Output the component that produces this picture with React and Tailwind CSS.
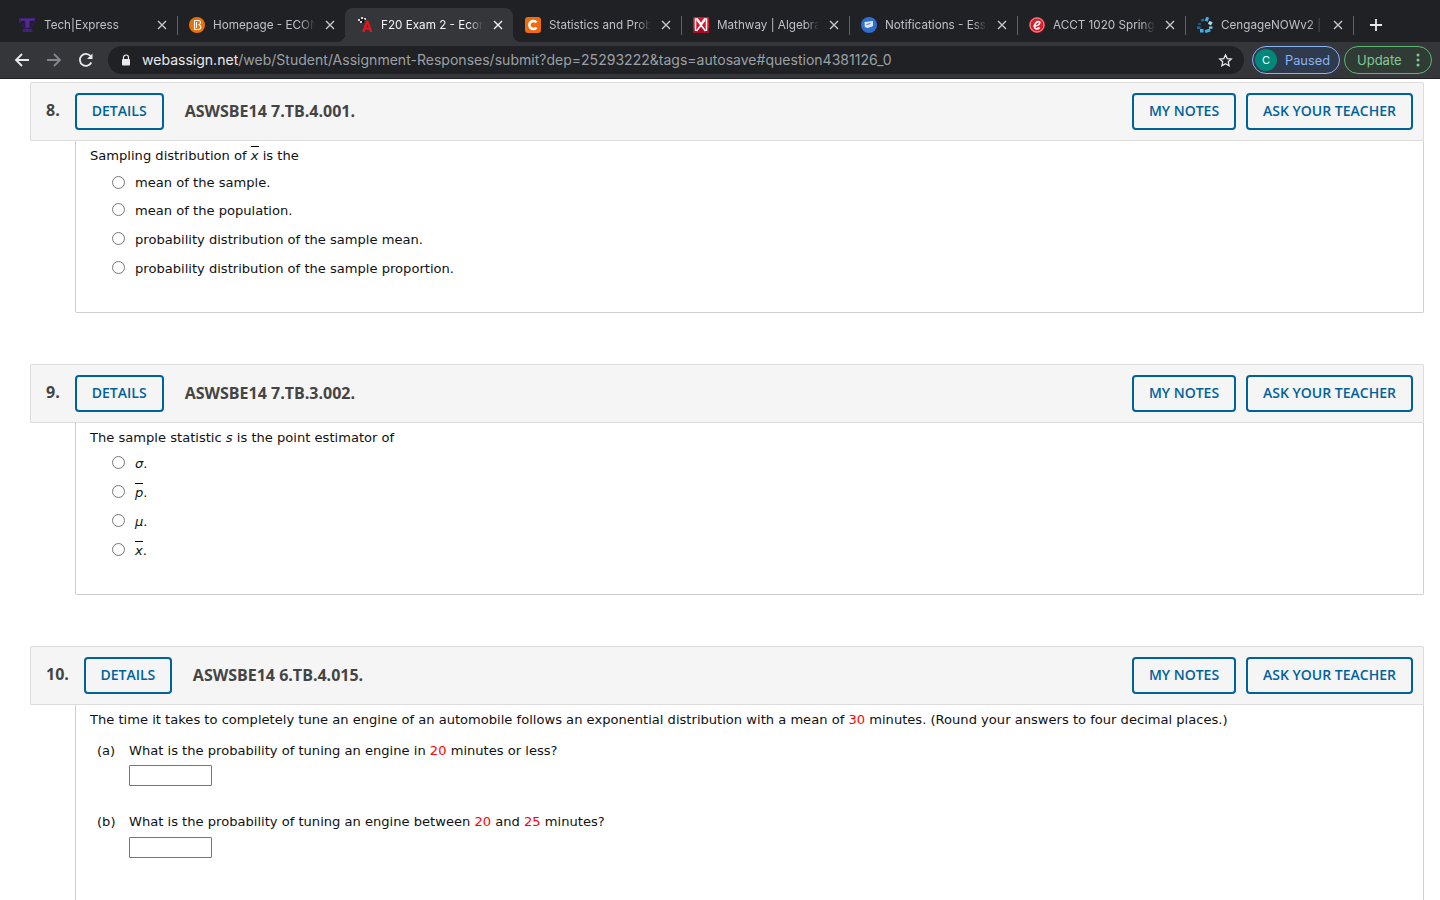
import React from "react";

const Fav = ({ children }) => (
  <svg width="16" height="16" viewBox="0 0 16 16" className="shrink-0">{children}</svg>
);

const icons = {
  tech: (
    <Fav>
      <path d="M0 1h17v4.500l-1.500 1V4h-4.500v7l2.300 2v2H3.500v-2l2.300-2V4H1.500v2.500L0 5.500z" fill="#3f2273" />
      <path d="M2 2h13v1.500H9.800V13H6.800V3.500H2z" fill="#55289a" />
      <path d="M3.500 6c0 4 2 5.500 5 5.500S13.500 10 13.500 6" stroke="#2f1a57" strokeWidth="1.600" fill="none" />
    </Fav>
  ),
  bright: (
    <Fav>
      <circle cx="8" cy="8" r="8" fill="#e8710a" />
      <path d="M5.500 3.500h4c1.500 0 2 1 2 2s-.8 2-2 2.300c1.500.2 2.300 1.200 2.300 2.300 0 1.400-1 2.400-2.500 2.400h-3.800z" fill="none" stroke="#fff" strokeWidth="1.100" />
      <path d="M7.500 5v6" stroke="#fff" strokeWidth="1" />
    </Fav>
  ),
  exam: (
    <Fav>
      <g fill="#d1d5db">
        <rect x="1" y="2" width="2" height="2" />
        <rect x="4" y="0" width="2" height="2" />
        <rect x="7" y="1" width="2" height="2" />
        <rect x="3" y="4" width="2" height="2" />
      </g>
      <g fill="#111">
        <rect x="3" y="2" width="1.500" height="2" />
        <rect x="6" y="2" width="1.500" height="2" />
        <rect x="5" y="4" width="2" height="2" />
      </g>
      <path d="M9.200 3.500h2L15.500 15h-2.600l-.7-2.300H8.400L7.700 15H5z" fill="#e3161f" />
      <path d="M9.300 10.600h2.200L10.400 7z" fill="#35363a" />
    </Fav>
  ),
  chegg: (
    <Fav>
      <rect width="16" height="16" rx="3" fill="#f26a0e" />
      <path d="M11.500 5.500A4 4 0 1 0 11.500 10.500" fill="none" stroke="#fff" strokeWidth="2.600" />
    </Fav>
  ),
  mathway: (
    <Fav>
      <rect width="16" height="16" rx="1" fill="#d7152f" />
      <rect y="11" width="16" height="5" fill="#a30d25" />
      <path d="M2.500 14V2h2L8 7l3.500-5h2v12M4 3l8.500 11M12 3L3.500 14" fill="none" stroke="#fff" strokeWidth="1.500" />
    </Fav>
  ),
  notif: (
    <Fav>
      <circle cx="8" cy="8" r="8" fill="#2f6fd0" />
      <path d="M3.500 5l8.500-1v5.500L6.500 11 3.800 10z" fill="#dbe7fa" />
      <path d="M5.500 7.500l4-1M8 11.500l4-2" stroke="#2f6fd0" strokeWidth=".9" />
    </Fav>
  ),
  acct: (
    <Fav>
      <circle cx="8" cy="8" r="8" fill="#d6202c" />
      <circle cx="8" cy="8" r="7" fill="none" stroke="#f2b8bc" strokeWidth=".8" />
      <path d="M4.500 8.800c3 .2 6-1 6.300-3 .2-1.600-2.300-1.600-3.800 0C5.500 7.500 4.800 10.500 6.500 11.500c1.300.7 3 0 4.200-1" fill="none" stroke="#fff" strokeWidth="1.700" />
    </Fav>
  ),
  cengage: (
    <Fav>
      <rect x="4" y="2" width="3" height="2.500" transform="rotate(-20 5 3)" fill="#1d6f9c" />
      <rect x="8.500" y="0" width="3" height="4.500" transform="rotate(20 10 2)" fill="#3fb0e4" />
      <rect x="12" y="4" width="3.500" height="3.500" transform="rotate(30 13 5)" fill="#a9dcf2" />
      <rect x="1" y="6" width="3" height="2.200" fill="#155a80" />
      <rect x="0" y="9.500" width="3.500" height="2.500" fill="#1d6f9c" />
      <rect x="3" y="12" width="3.500" height="3.500" fill="#3fb0e4" />
      <rect x="8" y="12.500" width="5.500" height="3" transform="rotate(-20 10 14)" fill="#3fb0e4" />
      <rect x="12" y="9.500" width="3.500" height="2.200" fill="#7fcbeb" />
    </Fav>
  ),
};

const tabs = [
  { icon: "tech", title: "Tech|Express" },
  { icon: "bright", title: "Homepage - ECON 2" },
  { icon: "exam", title: "F20 Exam 2 - Econ 2", active: true },
  { icon: "chegg", title: "Statistics and Probability" },
  { icon: "mathway", title: "Mathway | Algebra Pro" },
  { icon: "notif", title: "Notifications - Essay" },
  { icon: "acct", title: "ACCT 1020 Spring 21" },
  { icon: "cengage", title: "CengageNOWv2 | Online" },
];

const X = ({ active }) => (
  <svg width="10" height="10" viewBox="0 0 10 10" className="shrink-0">
    <path d="M1 1l8 8M9 1l-8 8" stroke={active ? "#f1f3f4" : "#c4c7ca"} strokeWidth="1.400" />
  </svg>
);

function Tab({ t, sep }) {
  return (
    <div
      className={`relative flex h-[34px] w-[168px] shrink-0 items-center rounded-t-lg pr-[10px] ${
        t.active ? "bg-[#35363a] text-[#f1f3f4]" : "text-[#bdc1c6]"
      } ${t.icon === "tech" ? "pl-[10px]" : "pl-[12px]"}`}
    >
      {t.active && (
        <>
          <span className="absolute bottom-0 left-[-8px] h-[8px] w-[8px] bg-[radial-gradient(circle_at_0_0,transparent_8px,#35363a_8px)]" />
          <span className="absolute bottom-0 right-[-8px] h-[8px] w-[8px] bg-[radial-gradient(circle_at_100%_0,transparent_8px,#35363a_8px)]" />
        </>
      )}
      {icons[t.icon]}
      <span
        className={`w-[102px] overflow-hidden whitespace-nowrap pt-[1px] text-[11.7px] [mask-image:linear-gradient(to_right,#000_86%,transparent)] ${
          t.icon === "tech" ? "ml-[9px]" : "ml-[8px]"
        }`}
      >
        {t.title}
      </span>
      <span className={t.icon === "tech" ? "ml-[11px]" : "ml-[10px]"}><X active={t.active} /></span>
      {sep && <span className="absolute right-[-1px] top-[8px] h-[19px] w-px bg-[#5f6368]" />}
    </div>
  );
}

function Browser() {
  return (
    <div className="font-['Inter',sans-serif]">
      <div className="flex h-[42px] items-start bg-[#202124] pl-[9px] pt-[8px]">
        {tabs.map((t, i) => (
          <Tab key={t.icon} t={t} sep={i !== 1 && i !== 2} />
        ))}
        <svg width="14" height="14" viewBox="0 0 14 14" className="ml-[16px] mt-[10px]">
          <path d="M7 1v12M1 7h12" stroke="#e8eaed" strokeWidth="1.800" />
        </svg>
      </div>
      <div className="flex h-[37px] items-center border-b border-b-[#202124] bg-[#35363a] pl-[14px] pr-[8px]">
        <svg width="16" height="16" viewBox="0 0 16 16">
          <path d="M15 8H2M8 2L2 8l6 6" fill="none" stroke="#e8eaed" strokeWidth="1.800" />
        </svg>
        <svg width="16" height="16" viewBox="0 0 16 16" className="ml-[16px]">
          <path d="M1 8h13M8 2l6 6-6 6" fill="none" stroke="#84878b" strokeWidth="1.800" />
        </svg>
        <svg width="16" height="16" viewBox="0 0 16 16" className="ml-[16px]">
          <path d="M13.300 10.500A6 6 0 1 1 12.500 4" fill="none" stroke="#e8eaed" strokeWidth="1.800" />
          <path d="M14.500 1.500v5.500H9z" fill="#e8eaed" />
        </svg>
        <div className="ml-[14px] flex h-[28px] flex-1 items-center rounded-full bg-[#202124] pl-[13px] pr-[11px]">
          <svg width="10" height="12" viewBox="0 0 10 12">
            <path d="M2.500 5V3.500a2.500 2.500 0 0 1 5 0V5" fill="none" stroke="#e8eaed" strokeWidth="1.200" />
            <rect x="1" y="5" width="8" height="6.500" rx="1" fill="#e8eaed" />
          </svg>
          <span className="ml-[11px] flex-1 whitespace-nowrap text-[14.04px] text-[#9aa0a6]">
            <span className="text-[#e8eaed]">webassign.net</span>/web/Student/Assignment-Responses/submit?dep=25293222&amp;tags=autosave#question4381126_0
          </span>
          <svg width="15" height="15" viewBox="0 0 24 24">
            <path d="M12 3l2.800 6 6.500.7-4.900 4.400 1.400 6.400L12 17.200 6.200 20.500l1.400-6.400L2.700 9.700 9.200 9z" fill="none" stroke="#e8eaed" strokeWidth="2" />
          </svg>
        </div>
        <div className="ml-[8px] flex h-[28px] w-[88px] items-center rounded-full border border-[#8ab4f8] bg-[#2f3a4c] pl-[2px]">
          <span className="flex h-[22px] w-[22px] items-center justify-center rounded-full bg-[#00897b] text-[11px] text-white">C</span>
          <span className="ml-[8px] pt-[1px] text-[12.8px] text-[#8ab4f8]">Paused</span>
        </div>
        <div className="ml-[4px] flex h-[28px] w-[88px] items-center rounded-full border border-[#5bb974] bg-[#2f3b34] pl-[12px]">
          <span className="pt-[1px] text-[13px] text-[#81c995]">Update</span>
          <svg width="4" height="14" viewBox="0 0 4 14" className="ml-[14px]">
            <circle cx="2" cy="2" r="1.500" fill="#81c995" />
            <circle cx="2" cy="7" r="1.500" fill="#81c995" />
            <circle cx="2" cy="12" r="1.500" fill="#81c995" />
          </svg>
        </div>
      </div>
    </div>
  );
}

const Btn = ({ children, className = "" }) => (
  <button className={`flex h-[37px] items-center justify-center rounded-[4px] border-2 border-[#00629b] bg-[#f5f5f5] pb-[2px] text-[14px] font-semibold text-[#00629b] ${className}`}>
    {children}
  </button>
);

function Header({ n, code, wide = true }) {
  return (
    <div className="ml-[30px] mr-[16px] flex h-[59px] items-center rounded-t-[2px] border border-[#dcdcdc] bg-[#f5f5f5] font-['Open_Sans',sans-serif] pl-[15px] pr-[10px]">
      <span className="-mt-[4px] mr-[15px] text-[16px] font-bold text-[#444]">{n}</span>
      <Btn className={wide ? "w-[89px]" : "w-[88px]"}>DETAILS</Btn>
      <span className="-mt-[2px] ml-[21px] flex-1 text-[16px] font-bold text-[#444]">{code}</span>
      <Btn className="w-[104px]">MY NOTES</Btn>
      <Btn className="ml-[10px] w-[167px]">ASK YOUR TEACHER</Btn>
    </div>
  );
}

const Bar = ({ children }) => (
  <span className="relative inline-block italic">
    {children}
    <span className="absolute left-0 right-0 top-0 h-px bg-black" />
  </span>
);

function Body({ children, className = "h-[172px] mb-[51px]" }) {
  return (
    <div className={`ml-[75px] mr-[16px] rounded-b-[2px] border-x border-b border-[#cfcfcf] pl-[14px] font-['DejaVu_Sans',sans-serif] text-[13.08px] text-[#111] ${className}`}>
      {children}
    </div>
  );
}

function Option({ children, className, up }) {
  return (
    <div className={`flex items-center pl-[22px] ${className}`}>
      <span className={`h-[13px] w-[13px] shrink-0 rounded-full border border-[#767676] bg-white ${up ? "-mt-[2px]" : ""}`} />
      <span className={`ml-[10px] ${up ? "" : "pt-[2px]"}`}>{children}</span>
    </div>
  );
}

const Red = ({ children }) => <span className="text-[#ff0000]">{children}</span>;

const Answer = () => <div className="ml-[39px] h-[21px] w-[83px] rounded-[1px] border border-[#767676]" />;

export default function App() {
  return (
    <div className="h-[900px] w-[1440px] overflow-hidden bg-white">
      <Browser />
      <div className="pt-[3px]">
        <Header n="8." code="ASWSBE14 7.TB.4.001." />
        <Body>
          <div className="flex h-[27px] items-center pt-[2px]">
            <span>Sampling distribution of <Bar>x</Bar> is the</span>
          </div>
          <Option up className="mt-[2px] h-[26px]">mean of the sample.</Option>
          <Option up className="mt-[1px] h-[27px]">mean of the population.</Option>
          <Option up className="h-[31px]">probability distribution of the sample mean.</Option>
          <Option up className="h-[27px]">probability distribution of the sample proportion.</Option>
        </Body>

        <Header n="9." code="ASWSBE14 7.TB.3.002." />
        <Body>
          <div className="flex h-[27px] items-center pt-[2px]">
            <span>The sample statistic <i>s</i> is the point estimator of</span>
          </div>
          <Option className="h-[25px]"><i>σ</i>.</Option>
          <Option className="mt-[2px] h-[29px]"><Bar>p</Bar>.</Option>
          <Option className="h-[29px]"><i>μ</i>.</Option>
          <Option className="h-[29px]"><Bar>x</Bar>.</Option>
        </Body>

        <Header n="10." code="ASWSBE14 6.TB.4.015." wide={false} />
        <Body className="h-[260px]">
          <div className="flex h-[27px] items-center pt-[2px] whitespace-nowrap">
            <span>The time it takes to completely tune an engine of an automobile follows an exponential distribution with a mean of <Red>30</Red> minutes. (Round your answers to four decimal places.)</span>
          </div>
          <div className="mt-[9px] flex h-[20px] items-center pl-[7px]">
            <span className="w-[32px]">(a)</span>
            <span>What is the probability of tuning an engine in <Red>20</Red> minutes or less?</span>
          </div>
          <div className="mt-[4px]"><Answer /></div>
          <div className="mt-[26px] flex h-[20px] items-center pl-[7px]">
            <span className="w-[32px]">(b)</span>
            <span>What is the probability of tuning an engine between <Red>20</Red> and <Red>25</Red> minutes?</span>
          </div>
          <div className="mt-[5px]"><Answer /></div>
        </Body>
      </div>
    </div>
  );
}
